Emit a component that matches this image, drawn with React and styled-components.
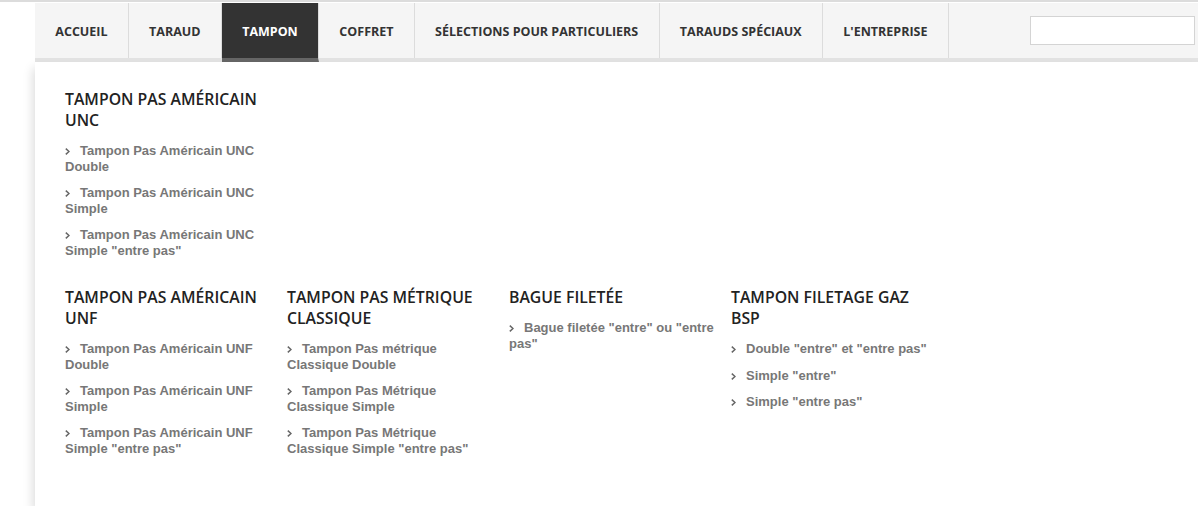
import React from "react";
import styled, { createGlobalStyle } from "styled-components";

const GlobalStyle = createGlobalStyle`
  body {
    margin: 0;
    background: #fff;
    font-family: "Open Sans", "Liberation Sans", sans-serif;
    overflow: hidden;
  }
`;

const Page = styled.div`
  border-top: 2px solid #dcdcdc;
  padding-top: 1px;
  height: 503px;
  display: flex;
  flex-direction: column;
`;

const Wrapper = styled.div`
  margin-left: 35px;
  flex: 1;
  display: flex;
  flex-direction: column;
`;

const NavBar = styled.nav`
  display: flex;
  align-items: stretch;
  height: 55px;
  background: #f5f5f5;
  border-bottom: 4px solid #e3e3e3;
`;

const Tab = styled.a`
  display: flex;
  align-items: center;
  padding: 2px 20.3px 0;
  font-family: "Open Sans", sans-serif;
  font-weight: 700;
  font-size: 12.5px;
  text-transform: uppercase;
  color: ${(p) => (p.active ? "#fff" : "#333")};
  background: ${(p) => (p.active ? "#333" : "transparent")};
  border-right: 1px solid #dcdcdc;
  margin-bottom: ${(p) => (p.active ? "-4px" : "0")};
  border-bottom: ${(p) => (p.active ? "4px solid #666" : "none")};
  cursor: pointer;
  white-space: nowrap;
`;

const Search = styled.input`
  margin: 13px 3px 0 auto;
  width: 165px;
  height: 29px;
  box-sizing: border-box;
  border: 1px solid #d4d4d4;
  background: #fff;
  outline: none;
`;

const Dropdown = styled.div`
  flex: 1;
  background: #fff;
  box-shadow: -2px 6px 10px rgba(0, 0, 0, 0.14);
  padding: 27px 30px 0;
  display: flex;
  flex-direction: column;
  gap: 29px;
`;

const Row = styled.div`
  display: flex;
  gap: 16px;
`;

const Column = styled.div`
  width: 206px;
`;

const Heading = styled.h3`
  margin: 0 0 12px;
  font-family: "Open Sans", sans-serif;
  font-weight: 600;
  font-size: 15.8px;
  line-height: 21px;
  color: #222;
  text-transform: uppercase;
`;

const LinkList = styled.ul`
  list-style: none;
  margin: 0;
  padding: 0;
  display: flex;
  flex-direction: column;
  gap: 11px;
`;

const LinkItem = styled.li`
  font-family: "Liberation Sans", Arial, sans-serif;
  font-weight: 700;
  font-size: 13px;
  line-height: 15.5px;
  color: #777;
`;

const Chevron = () => (
  <svg
    width="5"
    height="7"
    viewBox="0 0 5 7"
    style={{ marginRight: 10, verticalAlign: "0px" }}
  >
    <path d="M0.8 0.6 L4 3.5 L0.8 6.4" fill="none" stroke="#666" strokeWidth="1.5" />
  </svg>
);

const tabs = [
  "Accueil",
  "Taraud",
  "Tampon",
  "Coffret",
  "Sélections pour particuliers",
  "Tarauds spéciaux",
  "L'entreprise",
];

const rows = [
  [
    {
      title: "Tampon Pas Américain UNC",
      links: [
        "Tampon Pas Américain UNC Double",
        "Tampon Pas Américain UNC Simple",
        'Tampon Pas Américain UNC Simple "entre pas"',
      ],
    },
  ],
  [
    {
      title: "Tampon Pas Américain UNF",
      links: [
        "Tampon Pas Américain UNF Double",
        "Tampon Pas Américain UNF Simple",
        'Tampon Pas Américain UNF Simple "entre pas"',
      ],
    },
    {
      title: "Tampon Pas Métrique Classique",
      links: [
        "Tampon Pas métrique Classique Double",
        "Tampon Pas Métrique Classique Simple",
        'Tampon Pas Métrique Classique Simple "entre pas"',
      ],
    },
    {
      title: "Bague filetée",
      links: ['Bague filetée "entre" ou "entre pas"'],
    },
    {
      title: "Tampon filetage gaz BSP",
      links: ['Double "entre" et "entre pas"', 'Simple "entre"', 'Simple "entre pas"'],
    },
  ],
];

const App = () => {
  return (
    <>
      <GlobalStyle />
      <Page>
        <Wrapper>
          <NavBar>
            {tabs.map((t) => (
              <Tab key={t} active={t === "Tampon"}>
                {t}
              </Tab>
            ))}
            <Search type="text" />
          </NavBar>
          <Dropdown>
            {rows.map((row, i) => (
              <Row key={i}>
                {row.map((col) => (
                  <Column key={col.title}>
                    <Heading>{col.title}</Heading>
                    <LinkList>
                      {col.links.map((l) => (
                        <LinkItem key={l}>
                          <Chevron />
                          {l}
                        </LinkItem>
                      ))}
                    </LinkList>
                  </Column>
                ))}
              </Row>
            ))}
          </Dropdown>
        </Wrapper>
      </Page>
    </>
  );
};

export default App;
